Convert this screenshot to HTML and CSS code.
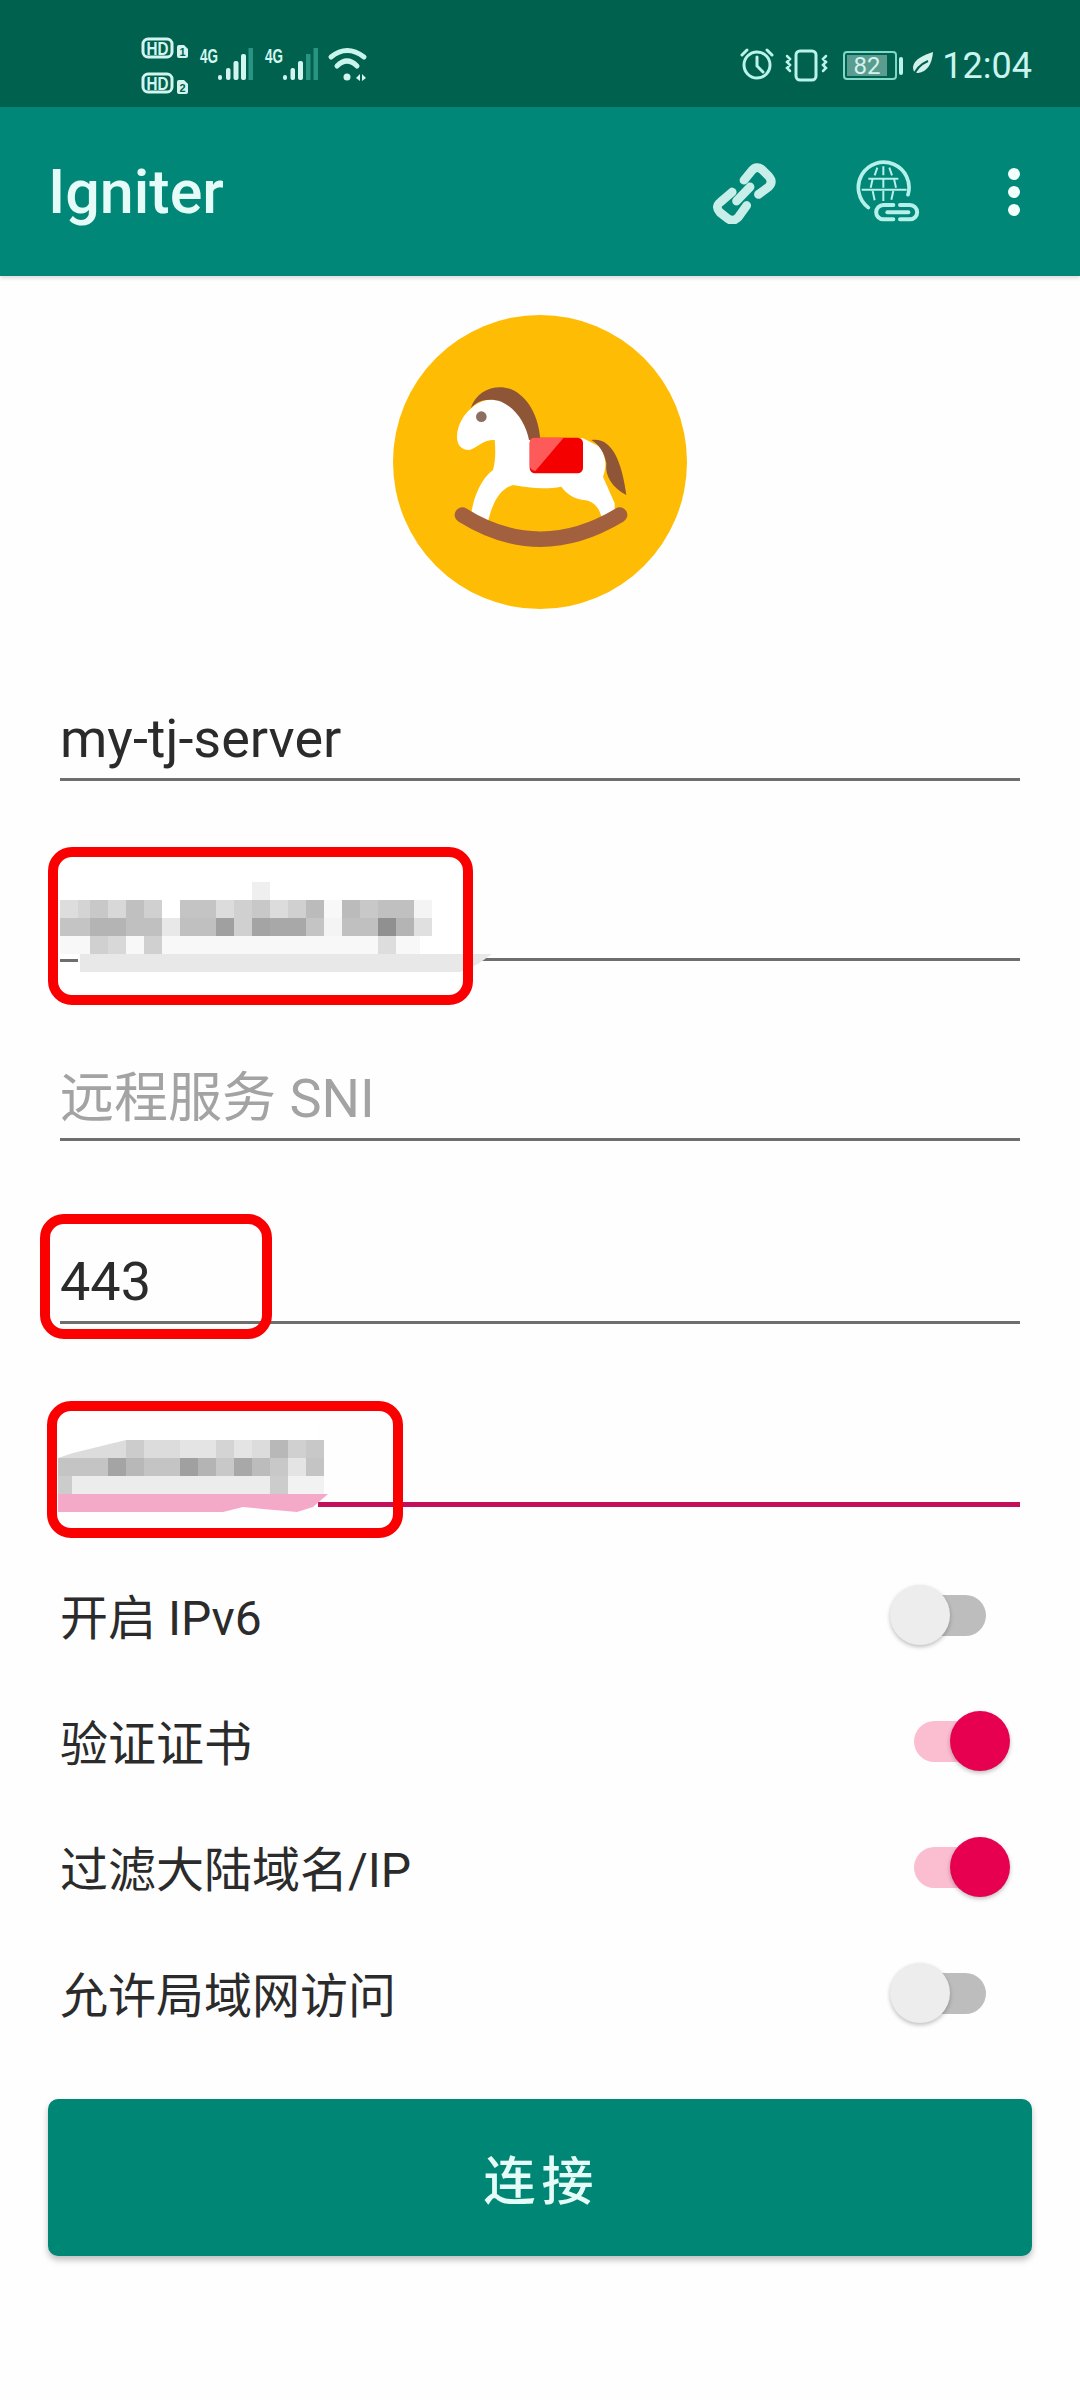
FILE: index.html
```html
<!DOCTYPE html>
<html lang="zh-CN">

<head>
    <meta charset="UTF-8">
    <title>Igniter</title>
    <link rel="stylesheet" href="styles.css">
</head>

<body>
    <div id="status-bar">
        <svg class="status-left" width="240" height="107" viewBox="130 0 240 107">
            <g class="sb-text">
                <rect class="hd-box" x="143" y="39" width="29" height="18" rx="5" />
                <text class="hd" x="157.500" y="54.500" text-anchor="middle" textLength="22" lengthAdjust="spacingAndGlyphs">HD</text>
                <rect class="hd-box" x="143" y="74" width="29" height="18" rx="5" />
                <text class="hd" x="157.500" y="89.500" text-anchor="middle" textLength="22" lengthAdjust="spacingAndGlyphs">HD</text>
                <path class="sim" d="M177 47a2 2 0 0 1 2-2h5l4 4v7a2 2 0 0 1-2 2h-7a2 2 0 0 1-2-2z" />
                <text class="sim-no" x="182.500" y="56" text-anchor="middle">1</text>
                <path class="sim" d="M177 82a2 2 0 0 1 2-2h5l4 4v8a2 2 0 0 1-2 2h-7a2 2 0 0 1-2-2z" />
                <text class="sim-no" x="182.500" y="92" text-anchor="middle">2</text>
                <text class="net" x="200" y="63" textLength="18" lengthAdjust="spacingAndGlyphs">4G</text>
                <text class="net" x="265" y="63" textLength="18" lengthAdjust="spacingAndGlyphs">4G</text>
            </g>
            <g class="bars">
                <rect x="218" y="75" width="4" height="5" rx="2" />
                <rect x="226" y="68" width="4.500" height="12" rx="2" />
                <rect x="233.500" y="61" width="5" height="19" rx="2" />
                <rect x="241" y="54" width="5" height="26" rx="2" />
                <rect class="dim" x="248.500" y="48" width="4.500" height="32" />
                <rect x="283" y="75" width="4" height="5" rx="2" />
                <rect x="290.500" y="68" width="4.500" height="12" rx="2" />
                <rect x="298" y="61" width="5" height="19" rx="2" />
                <rect class="dim" x="306" y="54" width="4.500" height="26" />
                <rect class="dim" x="313.500" y="48" width="4.500" height="32" />
            </g>
            <g class="wifi">
                <path d="M331 57Q347 44 364 57" />
                <path d="M337 66Q347 56 357 66" />
            </g>
            <circle class="wifi-dot" cx="347" cy="77" r="3.500" />
            <path class="wifi-dot" d="M356 78l4-4v7zM362 74l4 4-4 3z" />
        </svg>
        <div class="status-right">
            <svg width="170" height="107" viewBox="740 0 170 107">
                <g class="line-icon">
                    <circle cx="758" cy="65" r="13" />
                    <path d="M758 57v9l6 6M743 55l5-5M773 55l-5-5" />
                    <rect x="797" y="51" width="20" height="29" rx="4" />
                    <path class="thin" d="M788 56l3 3-3 3 3 3-3 3 3 3M827 56l-3 3 3 3-3 3 3 3-3 3" />
                </g>
                <rect class="batt" x="845" y="52" width="52" height="27" rx="3" />
                <rect class="batt-fill" x="848" y="55" width="40" height="21" />
                <text class="batt-text" x="868" y="74" text-anchor="middle">82</text>
                <rect class="batt-nub" x="900" y="57" width="4" height="18" rx="2" />
            </svg>
            <svg class="leaf" width="22" height="26" viewBox="0 0 22 26">
                <path d="M21 0C20 12 15 20 6 21 2 21 1 18 1 15 2 7 12 3 21 0z" />
                <path class="vein" d="M1 25C4 16 9 12 16 9" />
            </svg>
            <span class="time">12:04</span>
        </div>
    </div>

    <div id="app-bar">
        <span class="app-title">Igniter</span>
        <div class="app-actions">
            <svg width="64" height="64" viewBox="100 90 190 190">
                <g class="link-icon">
                    <path d="M192 150L215 122Q228 105 245 118L265 138Q280 155 265 170L235 192" />
                    <path d="M157 185L122 215Q105 228 120 245L145 265Q160 275 175 260L200 225" />
                    <path d="M170 212L210 170" />
                </g>
            </svg>
            <svg width="65" height="64" viewBox="525 90 195 190">
                <g class="globe-icon">
                    <path d="M565 232A76 76 0 1 1 684 193" />
                    <path class="fine" d="M545 178H680M565 145H655M592 112L584 135M610 108V135M628 112L636 135M578 145L572 172M610 145V172M642 145L648 172M578 182L584 210M610 182V212M640 182L634 208" />
                </g>
                <g class="chain-icon">
                    <path d="M640 224H610A21 21 0 0 0 610 267H640" />
                    <path d="M660 224H690A21 21 0 0 1 690 267H660" />
                    <path d="M622 246H685" />
                </g>
            </svg>
            <svg class="menu-dots" width="12" height="48" viewBox="0 0 12 48">
                <circle class="dot" cx="6" cy="6" r="6" />
                <circle class="dot" cx="6" cy="24" r="6" />
                <circle class="dot" cx="6" cy="42" r="6" />
            </svg>
        </div>
    </div>

    <div id="content">
        <svg class="logo" width="294" height="294" viewBox="70 45 882 882">
            <circle cx="511" cy="486" r="441" fill="#ffbc05" />
            <path fill="#fff" d="M262 410C262 375 285 340 305 325C340 290 400 290 440 325C475 355 495 390 505 420L640 415L690 440C710 470 712 500 700 530L735 610L735 650L695 650C690 625 670 600 640 600C610 595 590 580 575 560C530 568 480 565 430 555C395 565 370 600 355 665L305 640C310 600 330 540 370 510C378 480 378 450 375 420C345 418 325 440 300 450C275 450 262 435 262 410z" />
            <path fill="#8e5637" d="M303 325C320 270 380 250 425 268C475 290 508 350 512 420H478C470 375 440 325 395 305C355 292 322 302 303 325z" />
            <path fill="#8e5637" d="M665 420C720 410 755 470 770 585C730 565 705 530 710 490C705 460 690 435 665 420z" />
            <path fill="none" stroke="#a3603f" stroke-width="46" stroke-linecap="round" d="M278 645Q510 790 750 645" />
            <rect x="480" y="413" width="160" height="107" rx="16" fill="#f40000" />
            <path fill="#ff5a5a" d="M480 428Q480 413 495 413H582L497 513Q480 510 480 495z" />
            <circle cx="335" cy="350" r="16" fill="#8d6e63" />
        </svg>

        <div class="fields">
            <div class="field">my-tj-server</div>
            <div class="field"></div>
            <div class="field hint">远程服务 SNI</div>
            <div class="field port">443</div>
            <div class="field active"></div>
        </div>

        <div class="switches">
            <div class="switch-row">
                <span class="switch-label">开启 IPv6</span>
                <div class="switch"><div class="track"><div class="thumb"></div></div></div>
            </div>
            <div class="switch-row">
                <span class="switch-label">验证证书</span>
                <div class="switch on"><div class="track"><div class="thumb"></div></div></div>
            </div>
            <div class="switch-row">
                <span class="switch-label">过滤大陆域名/IP</span>
                <div class="switch on"><div class="track"><div class="thumb"></div></div></div>
            </div>
            <div class="switch-row">
                <span class="switch-label">允许局域网访问</span>
                <div class="switch"><div class="track"><div class="thumb"></div></div></div>
            </div>
        </div>

        <button class="connect">连接</button>
    </div>

    <!-- mosaic and red marks drawn over the screenshot -->
    <svg id="marks" width="1080" height="2400" viewBox="0 0 1080 2400">
        <rect x="40" y="860" width="440" height="130" fill="#fff" />
        <rect x="252" y="882" width="18" height="18" fill="#efefef" />
        <g>
            <rect x="60" y="900" width="18" height="18" fill="#dddddd" />
            <rect x="78" y="900" width="12" height="18" fill="#d4d4d4" />
            <rect x="90" y="900" width="18" height="18" fill="#c8c8c8" />
            <rect x="108" y="900" width="18" height="18" fill="#d8d8d8" />
            <rect x="126" y="900" width="18" height="18" fill="#c0c0c0" />
            <rect x="144" y="900" width="18" height="18" fill="#d0d0d0" />
            <rect x="180" y="900" width="36" height="18" fill="#c4c4c4" />
            <rect x="216" y="900" width="18" height="18" fill="#dcdcdc" />
            <rect x="234" y="900" width="18" height="18" fill="#d0d0d0" />
            <rect x="252" y="900" width="18" height="18" fill="#c8c8c8" />
            <rect x="270" y="900" width="18" height="18" fill="#dcdcdc" />
            <rect x="288" y="900" width="18" height="18" fill="#d0d0d0" />
            <rect x="306" y="900" width="18" height="18" fill="#bbbbbb" />
            <rect x="324" y="900" width="18" height="18" fill="#f8f8f8" />
            <rect x="342" y="900" width="18" height="18" fill="#bbbbbb" />
            <rect x="360" y="900" width="18" height="18" fill="#c8c8c8" />
            <rect x="378" y="900" width="36" height="18" fill="#c0c0c0" />
            <rect x="414" y="900" width="18" height="18" fill="#f4f4f4" />
        </g>
        <g>
            <rect x="60" y="918" width="30" height="18" fill="#c4c4c4" />
            <rect x="90" y="918" width="36" height="18" fill="#b4b4b4" />
            <rect x="126" y="918" width="36" height="18" fill="#c0c0c0" />
            <rect x="162" y="918" width="18" height="18" fill="#e8e8e8" />
            <rect x="180" y="918" width="36" height="18" fill="#c0c0c0" />
            <rect x="216" y="918" width="18" height="18" fill="#a0a0a0" />
            <rect x="234" y="918" width="18" height="18" fill="#d0d0d0" />
            <rect x="252" y="918" width="18" height="18" fill="#a4a4a4" />
            <rect x="270" y="918" width="36" height="18" fill="#a8a8a8" />
            <rect x="306" y="918" width="18" height="18" fill="#c4c4c4" />
            <rect x="324" y="918" width="18" height="18" fill="#f4f4f4" />
            <rect x="342" y="918" width="36" height="18" fill="#c0c0c0" />
            <rect x="378" y="918" width="18" height="18" fill="#909090" />
            <rect x="396" y="918" width="18" height="18" fill="#b4b4b4" />
            <rect x="414" y="918" width="18" height="18" fill="#e0e0e0" />
        </g>
        <g>
            <rect x="60" y="936" width="360" height="18" fill="#f8f8f8" />
            <rect x="90" y="936" width="18" height="18" fill="#d0d0d0" />
            <rect x="108" y="936" width="18" height="18" fill="#d8d8d8" />
            <rect x="144" y="936" width="18" height="18" fill="#d0d0d0" />
            <rect x="378" y="936" width="18" height="18" fill="#dddddd" />
        </g>
        <path fill="#e8e8e8" d="M80 954H492L478 964L460 972H80z" />
        <path fill="#6e6e6e" d="M60 959H78V962H60z" />

        <rect x="56" y="1420" width="262" height="90" fill="#fff" />
        <path fill="#dcdcdc" d="M73 1453L126 1440H180V1458H58z" />
        <g>
            <rect x="126" y="1440" width="18" height="18" fill="#cccccc" />
            <rect x="144" y="1440" width="36" height="18" fill="#dcdcdc" />
            <rect x="180" y="1440" width="36" height="18" fill="#e4e4e4" />
            <rect x="216" y="1440" width="18" height="18" fill="#d4d4d4" />
            <rect x="234" y="1440" width="18" height="18" fill="#e4e4e4" />
            <rect x="252" y="1440" width="18" height="18" fill="#dcdcdc" />
            <rect x="270" y="1440" width="18" height="18" fill="#b8b8b8" />
            <rect x="288" y="1440" width="18" height="18" fill="#d0d0d0" />
            <rect x="306" y="1440" width="18" height="18" fill="#c8c8c8" />
        </g>
        <g>
            <rect x="58" y="1458" width="50" height="18" fill="#c4c4c4" />
            <rect x="108" y="1458" width="18" height="18" fill="#a4a4a4" />
            <rect x="126" y="1458" width="18" height="18" fill="#b8b8b8" />
            <rect x="144" y="1458" width="36" height="18" fill="#c4c4c4" />
            <rect x="180" y="1458" width="18" height="18" fill="#a0a0a0" />
            <rect x="198" y="1458" width="18" height="18" fill="#b4b4b4" />
            <rect x="216" y="1458" width="18" height="18" fill="#c8c8c8" />
            <rect x="234" y="1458" width="18" height="18" fill="#a8a8a8" />
            <rect x="252" y="1458" width="18" height="18" fill="#bcbcbc" />
            <rect x="270" y="1458" width="18" height="18" fill="#c8c8c8" />
            <rect x="288" y="1458" width="18" height="18" fill="#e4e4e4" />
            <rect x="306" y="1458" width="18" height="18" fill="#c4c4c4" />
        </g>
        <g>
            <rect x="58" y="1476" width="14" height="18" fill="#cccccc" />
            <rect x="72" y="1476" width="198" height="18" fill="#ececec" />
            <rect x="270" y="1476" width="18" height="18" fill="#cccccc" />
            <rect x="288" y="1476" width="36" height="18" fill="#f2f2f2" />
        </g>
        <path fill="#f4a9c8" d="M58 1494H328L313 1507L297 1512L263 1509L243 1507L223 1512H58z" />

        <rect class="mark" x="53" y="852" width="415" height="148" rx="19" />
        <rect class="mark" x="45" y="1219" width="222" height="115" rx="19" />
        <rect class="mark" x="52" y="1406" width="346" height="127" rx="19" />
    </svg>
</body>

</html>
```

FILE: styles.css
```css
body {
    margin: 0;
    width: 1080px;
    height: 2400px;
    position: relative;
    overflow: hidden;
    background-color: #fefefe;
    font-family: Roboto, "Noto Sans CJK SC", sans-serif;
    color: #2b2b2b;
}

#status-bar {
    height: 107px;
    background-color: #00614f;
    display: flex;
    justify-content: space-between;
    padding-left: 130px;
    padding-right: 48px;
}

.status-right {
    display: flex;
    align-items: flex-start;
}

.leaf {
    margin-top: 52px;
    margin-left: 3px;
}

.leaf path {
    fill: #d4f2ec;
}

.leaf .vein {
    fill: none;
    stroke: #00614f;
    stroke-width: 2;
}

.time {
    margin-left: 8px;
    margin-top: 45px;
    font-size: 36px;
    line-height: 42px;
    color: #c9f5ee;
}

.hd-box {
    fill: none;
    stroke: #d2f5ef;
    stroke-width: 3;
}

.hd {
    font-family: "Liberation Sans", sans-serif;
    font-size: 18px;
    font-weight: bold;
    fill: #d2f5ef;
}

.sim {
    fill: #d2f5ef;
}

.sim-no {
    font-family: "Liberation Sans", sans-serif;
    font-size: 11px;
    font-weight: bold;
    fill: #00614f;
}

.net {
    font-family: "Liberation Sans", sans-serif;
    font-size: 21px;
    font-weight: bold;
    fill: #d2f5ef;
}

.bars rect {
    fill: #d2f5ef;
}

.bars .dim {
    fill: #2a9483;
}

.wifi path {
    fill: none;
    stroke: #c9f5ee;
    stroke-width: 5;
    stroke-linecap: round;
}

.wifi-dot {
    fill: #d2f5ef;
}

.line-icon circle,
.line-icon rect,
.line-icon path {
    fill: none;
    stroke: #b9f3ea;
    stroke-width: 3;
    stroke-linecap: round;
}

.line-icon .thin {
    stroke-width: 2.500;
}

.batt {
    fill: none;
    stroke: #7fd8c8;
    stroke-width: 2;
}

.batt-fill {
    fill: #5b9c90;
}

.batt-text {
    font-size: 24px;
    fill: #d4f2ec;
}

.batt-nub {
    fill: #b9f3ea;
}

#app-bar {
    height: 169px;
    box-sizing: border-box;
    background-color: #008777;
    display: flex;
    align-items: center;
    justify-content: space-between;
    padding-left: 48px;
    padding-right: 60px;
    box-shadow: 0 2px 4px rgba(0, 0, 0, 0.15);
}

.app-title {
    font-size: 61px;
    font-weight: 500;
    color: #e4fbf7;
}

.app-actions {
    display: flex;
    align-items: center;
    gap: 78px;
}

.menu-dots {
    margin-left: 10px;
}

.link-icon path {
    fill: none;
    stroke: #c8eeea;
    stroke-width: 26;
    stroke-linecap: round;
    stroke-linejoin: round;
}

.globe-icon path {
    fill: none;
    stroke: #b5f0ea;
    stroke-width: 11;
    stroke-linecap: round;
}

.globe-icon .fine {
    stroke-width: 6;
    stroke-linecap: butt;
}

.chain-icon path {
    fill: none;
    stroke: #b5f0ea;
    stroke-width: 12;
    stroke-linecap: round;
}

.dot {
    fill: #f2fffc;
}

#content {
    display: flex;
    flex-direction: column;
}

.logo {
    margin-top: 39px;
    align-self: center;
}

.fields {
    display: flex;
    flex-direction: column;
    gap: 90px;
    margin-top: 82px;
    padding: 0 60px;
}

.field {
    height: 87px;
    border-bottom: 3px solid #6e6e6e;
    font-size: 54px;
    line-height: 95px;
}

.field.hint {
    color: #a3a3a3;
}

.field.port {
    margin-top: 3px;
}

.field.active {
    height: 88px;
    border-bottom: 5px solid #c4105a;
}

.switches {
    margin-top: 45px;
}

.switch-row {
    height: 126px;
    display: flex;
    align-items: center;
    justify-content: space-between;
    padding-left: 60px;
    padding-right: 70px;
    font-size: 48px;
}

.switch-label {
    margin-bottom: 3px;
}

.switch {
    padding: 0 24px;
}

.track {
    width: 72px;
    height: 41px;
    border-radius: 21px;
    background-color: #bdbdbd;
    display: flex;
    align-items: center;
    justify-content: flex-start;
}

.thumb {
    flex: none;
    width: 60px;
    height: 60px;
    margin: 0 -24px;
    border-radius: 50%;
    background-color: #ededed;
    box-shadow: 0 2px 4px rgba(0, 0, 0, 0.25);
}

.switch.on .track {
    background-color: #fbbdd0;
    justify-content: flex-end;
}

.switch.on .thumb {
    background-color: #e6004f;
}

.connect {
    margin: 43px 48px 0;
    height: 157px;
    border: none;
    border-radius: 10px;
    background-color: #008675;
    color: #e4fbf7;
    font-family: Roboto, "Noto Sans CJK SC", sans-serif;
    font-size: 52px;
    font-weight: 500;
    letter-spacing: 6px;
    text-indent: 3px;
    box-shadow: 0 4px 6px rgba(0, 0, 0, 0.25);
}

#marks {
    position: absolute;
    top: 0;
    left: 0;
}

.mark {
    fill: none;
    stroke: #fb0000;
    stroke-width: 10;
}
```
